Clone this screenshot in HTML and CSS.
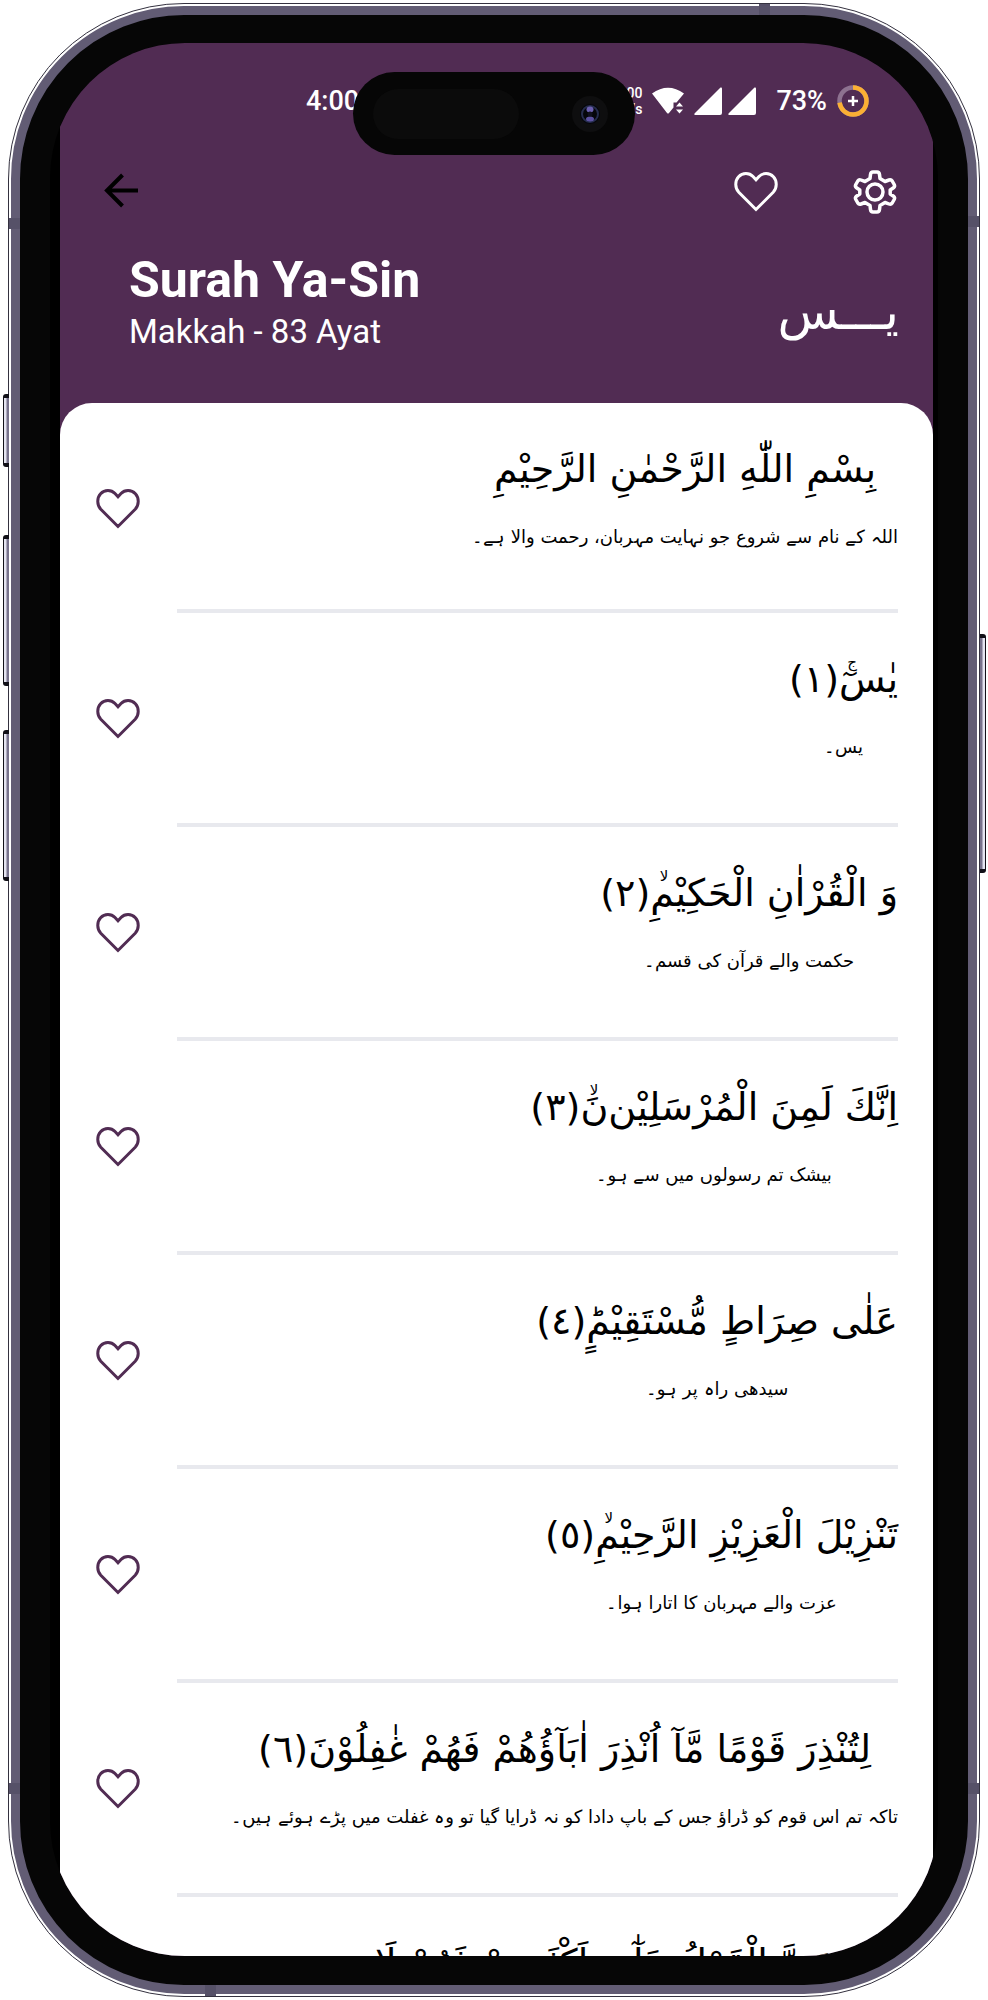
FILE: index.html
```html
<!DOCTYPE html>
<html lang="en">
<head>
<meta charset="utf-8">
<meta name="viewport" content="width=device-width, initial-scale=1">
<title>Surah Ya-Sin</title>
<link rel="stylesheet" href="styles.css">
</head>
<body>
<svg class="defs" aria-hidden="true">
  <symbol id="heart" viewBox="0 0 48 48"><path d="M24 42.500 6.800 25.300C2.800 21 2.800 13.800 6.600 9.700c4-4.300 10.600-4.200 14.400-.2l3 3.200 3-3.200c3.800-4 10.400-4.100 14.400.2 3.800 4.100 3.800 11.300-.2 15.600z" fill="none" stroke="currentColor" stroke-width="3"/></symbol>
</svg>
<div class="phone">
  <span class="key key-action"></span>
  <span class="key key-up"></span>
  <span class="key key-down"></span>
  <span class="key key-power"></span>
  <span class="band band-tl"></span>
  <span class="band band-tr"></span>
  <span class="band band-bl"></span>
  <span class="band band-br"></span>
  <span class="band band-top"></span>
  <span class="band band-bottom"></span>
  <div class="bezel">
    <div class="glass">
      <div class="island"><span class="sensor"></span>
        <svg class="camera" viewBox="0 0 36 36" aria-hidden="true"><circle cx="18" cy="18" r="18" fill="#0e0e0f"/><circle cx="18" cy="18" r="10" fill="#05060a"/><circle cx="18" cy="18" r="8" fill="none" stroke="#252c4c" stroke-width="2"/><ellipse cx="18" cy="13.500" rx="3.500" ry="3" fill="#6a5fb0"/><ellipse cx="18" cy="23" rx="4" ry="2.500" fill="#5a50a0"/><circle cx="18" cy="18" r="2.500" fill="#10101c"/></svg>
      </div>
      <div class="screen">
        <header class="header">
          <div class="status">
            <span class="time">4:00</span>
            <div class="indicators">
              <span class="speed"><span>00</span><span>/s</span></span>
              <svg class="wifi" viewBox="0 0 32 28" aria-hidden="true"><path d="M0 6.500Q16-5 32 6.500L24.500 15.500h-3v5L17 26Q16 27 15 26z" fill="currentColor"/><path d="m24 19.500 3.500-4 3.500 4zM24 22.500l3.500 4 3.500-4z" fill="currentColor"/></svg>
              <span class="signals">
                <svg class="signal" viewBox="0 0 28 28" aria-hidden="true"><path d="M26.500.5Q28 0 28 1.500V26q0 2-2 2H1Q0 28 .5 26.500z" fill="currentColor"/></svg>
                <svg class="signal" viewBox="0 0 28 28" aria-hidden="true"><path d="M26.500.5Q28 0 28 1.500V26q0 2-2 2H1Q0 28 .5 26.500z" fill="currentColor"/></svg>
              </span>
              <span class="percent">73%</span>
              <svg class="battery" viewBox="0 0 32 32" aria-hidden="true"><circle cx="16" cy="16" r="13.500" fill="none" stroke="#8d7290" stroke-width="4.500"/><circle cx="16" cy="16" r="13.500" fill="none" stroke="#fbb034" stroke-width="4.500" pathLength="100" stroke-dasharray="73 27" transform="rotate(-90 16 16)"/><path d="M16 11v10M11 16h10" stroke="#fff" stroke-width="2.500"/></svg>
            </div>
          </div>
          <nav class="toolbar">
            <button class="icon-button back" type="button" aria-label="Back"><svg viewBox="0 0 48 48" aria-hidden="true"><path d="M42 23.500H11M26.500 8 11 23.500 26.500 39" fill="none" stroke="currentColor" stroke-width="4"/></svg></button>
            <button class="icon-button" type="button" aria-label="Favourite surah"><svg aria-hidden="true"><use href="#heart"/></svg></button>
            <button class="icon-button" type="button" aria-label="Settings"><svg viewBox="0 0 48 48" aria-hidden="true"><g fill="none" stroke="currentColor" stroke-width="3.500" stroke-linejoin="round"><circle cx="24" cy="25" r="8"/><path d="M19.500 7.500Q19.800 5 22 5h4q2.200 0 2.500 2.500l.5 4 5 3 4-1.500q2-.8 3.200 1l2 3.500q1 2-.7 3.300L39.200 23v4l3.300 2.200q1.700 1.300.7 3.300l-2 3.500q-1.200 1.800-3.200 1l-4-1.500-5 3-.5 4q-.3 2.500-2.500 2.500h-4q-2.200 0-2.500-2.500l-.5-4-5-3-4 1.500q-2 .8-3.200-1l-2-3.500q-1-2 .7-3.300L8.800 27v-4l-3.300-2.200Q3.800 19.500 4.800 17.500l2-3.500q1.200-1.800 3.200-1l4 1.500 5-3z"/></g></svg></button>
          </nav>
          <div class="heading">
            <div>
              <h1 class="title">Surah Ya-Sin</h1>
              <p class="subtitle">Makkah - 83 Ayat</p>
            </div>
            <span class="name" lang="ar" dir="rtl">يـــس</span>
          </div>
        </header>
        <main class="sheet">
          <ul class="ayat">
            <li class="ayah"><button class="like" type="button" aria-label="Like"><svg aria-hidden="true"><use href="#heart"/></svg></button><div class="body"><div class="text" dir="rtl"><p class="verse" lang="ar">بِسْمِ اللّٰهِ الرَّحْمٰنِ الرَّحِيْمِ</p><p class="translation" lang="ur">اللہ کے نام سے شروع جو نہایت مہربان، رحمت والا ہے۔</p></div></div></li>
            <li class="ayah"><button class="like" type="button" aria-label="Like"><svg aria-hidden="true"><use href="#heart"/></svg></button><div class="body"><div class="text" dir="rtl"><p class="verse" lang="ar">یٰسٓ<span class="pause"><small>ج</small></span>(۱)</p><p class="translation" lang="ur">یس۔</p></div></div></li>
            <li class="ayah"><button class="like" type="button" aria-label="Like"><svg aria-hidden="true"><use href="#heart"/></svg></button><div class="body"><div class="text" dir="rtl"><p class="verse" lang="ar">وَ الْقُرْاٰنِ الْحَكِیْمِ<span class="pause"><small>لا</small></span>(٢)</p><p class="translation" lang="ur">حکمت والے قرآن کی قسم۔</p></div></div></li>
            <li class="ayah"><button class="like" type="button" aria-label="Like"><svg aria-hidden="true"><use href="#heart"/></svg></button><div class="body"><div class="text" dir="rtl"><p class="verse" lang="ar">اِنَّكَ لَمِنَ الْمُرْسَلِیْن‌نَ<span class="pause"><small>لا</small></span>(٣)</p><p class="translation" lang="ur">بیشک تم رسولوں میں سے ہو۔</p></div></div></li>
            <li class="ayah"><button class="like" type="button" aria-label="Like"><svg aria-hidden="true"><use href="#heart"/></svg></button><div class="body"><div class="text" dir="rtl"><p class="verse" lang="ar">عَلٰى صِرَاطٍ مُّسْتَقِیْمٍؕ(٤)</p><p class="translation" lang="ur">سیدھی راہ پر ہو۔</p></div></div></li>
            <li class="ayah"><button class="like" type="button" aria-label="Like"><svg aria-hidden="true"><use href="#heart"/></svg></button><div class="body"><div class="text" dir="rtl"><p class="verse" lang="ar">تَنْزِیْلَ الْعَزِیْزِ الرَّحِیْمِ<span class="pause"><small>لا</small></span>(٥)</p><p class="translation" lang="ur">عزت والے مہربان کا اتارا ہوا۔</p></div></div></li>
            <li class="ayah"><button class="like" type="button" aria-label="Like"><svg aria-hidden="true"><use href="#heart"/></svg></button><div class="body"><div class="text" dir="rtl"><p class="verse" lang="ar">لِتُنْذِرَ قَوْمًا مَّآ اُنْذِرَ اٰبَآؤُهُمْ فَهُمْ غٰفِلُوْنَ(٦)</p><p class="translation" lang="ur">تاکہ تم اس قوم کو ڈراؤ جس کے باپ دادا کو نہ ڈرایا گیا تو وہ غفلت میں پڑے ہوئے ہیں۔</p></div></div></li>
            <li class="ayah"><div class="body"><div class="text" dir="rtl"><p class="verse" lang="ar">لَقَدْ حَقَّ الْقَوْلُ عَلٰٓى اَكْثَرِهِمْ فَهُمْ لَا</p></div></div></li>
          </ul>
        </main>
      </div>
    </div>
  </div>
</div>
</body>
</html>
```
FILE: styles.css
```css
* {
  box-sizing: border-box;
}

body {
  margin: 0;
  padding: 3px 8px;
  background: #fff;
  font-family: Roboto, "Liberation Sans", sans-serif;
}

h1, p, ul {
  margin: 0;
  padding: 0;
}

button {
  padding: 0;
  border: 0;
  background: none;
  color: inherit;
}

svg {
  display: block;
}

.defs {
  display: block;
  width: 0;
  height: 0;
  position: absolute;
}

/* Device frame */

.phone {
  position: relative;
  height: calc(100vh - 6px);
  padding: 2px;
  border: 1px solid #34313f;
  border-radius: 176px;
  background: #fff;
}

.bezel {
  height: 100%;
  padding: 28px 30px 29px;
  border: 9px solid #625c74;
  border-radius: 173px;
  background: #060606;
}

.glass {
  position: relative;
  height: 100%;
  padding: 0 5px 0 10px;
  border-radius: 135px;
  overflow: hidden;
  background: #000;
}

.key {
  position: absolute;
  left: -6px;
  width: 6px;
  border: 1px solid #111018;
  border-width: 4px 0 4px 1px;
  border-radius: 3px 0 0 3px;
  background: linear-gradient(90deg, #e4e4f0 40%, #77728c 60%);
}

.key-action { top: 390px; height: 73px; }
.key-up { top: 531px; height: 151px; }
.key-down { top: 726px; height: 151px; }

.key-power {
  left: auto;
  right: -7px;
  top: 630px;
  height: 239px;
  border-width: 4px 1px 4px 0;
  border-radius: 0 3px 3px 0;
  background: linear-gradient(270deg, #e4e4f0 40%, #77728c 60%);
}

.band {
  position: absolute;
  width: 11px;
  height: 11px;
  background: #565168;
}

.band-tl { left: 0; top: 214px; }
.band-tr { right: 0; top: 212px; }
.band-bl { left: 0; bottom: 202px; }
.band-br { right: 0; bottom: 202px; }
.band-top { right: 209px; top: 0; }
.band-bottom { left: 196px; bottom: 0; }

.island {
  position: absolute;
  z-index: 2;
  top: 29px;
  left: 50%;
  width: 282px;
  height: 83px;
  margin-left: -141px;
  display: flex;
  align-items: center;
  justify-content: space-between;
  padding: 0 27px 0 20px;
  border-radius: 42px;
  background: #060606;
}

.sensor {
  width: 146px;
  height: 50px;
  border-radius: 25px;
  background: #0b0b0b;
}

.camera {
  width: 36px;
  height: 36px;
}

/* App */

.screen {
  display: flex;
  flex-direction: column;
  height: 100%;
  overflow: hidden;
  background: #512c53;
}

.header {
  flex: none;
  padding: 42px 34px 49px 36px;
  color: #fff;
}

.status {
  display: flex;
  align-items: center;
  justify-content: space-between;
  height: 32px;
  padding: 0 30px 0 210px;
  font-size: 27px;
  font-weight: 500;
}

.indicators {
  display: flex;
  align-items: center;
  gap: 10px;
}

.speed {
  display: flex;
  flex-direction: column;
  align-items: flex-end;
  font-size: 14px;
  line-height: 16px;
}

.wifi {
  width: 32px;
  height: 28px;
}

.signals {
  display: flex;
  gap: 6px;
  margin-right: 10px;
}

.signal {
  width: 28px;
  height: 28px;
}

.battery {
  width: 32px;
  height: 32px;
}

.toolbar {
  display: flex;
  gap: 71px;
  margin-top: 50px;
}

.icon-button,
.like {
  width: 48px;
  height: 48px;
}

.icon-button svg,
.like svg {
  width: 48px;
  height: 48px;
}

.back {
  margin-right: auto;
  color: #000;
}

.heading {
  display: flex;
  align-items: flex-end;
  justify-content: space-between;
  margin-top: 35px;
  padding-left: 33px;
}

.title {
  font-size: 50px;
  line-height: 60px;
  font-weight: 700;
}

.subtitle {
  font-size: 33px;
  line-height: 44px;
}

.name {
  font-family: "DejaVu Sans", sans-serif;
  font-size: 50px;
  line-height: 84px;
}

.sheet {
  flex: 1;
  min-height: 0;
  overflow: hidden;
  border-radius: 32px 32px 0 0;
  background: #fff;
}

.ayat {
  list-style: none;
}

.ayah {
  display: flex;
  gap: 35px;
  padding: 0 35px 0 34px;
  color: #512c53;
}

.like {
  flex: none;
  margin-top: 81px;
}

.body {
  flex: 1;
  display: flex;
  justify-content: flex-end;
  min-height: 214px;
  border-bottom: 4px solid #e8e9ee;
}

.ayah:first-child .body {
  min-height: 210px;
}

.text {
  display: flex;
  flex-direction: column;
  align-items: center;
  padding-top: 30px;
  color: #000;
  font-family: "DejaVu Sans", sans-serif;
  white-space: nowrap;
}

.verse {
  font-size: 38px;
  line-height: 72px;
}

/* Waqf sign drawn above the last letter of the verse */
.pause {
  position: relative;
}

.pause small {
  position: absolute;
  right: -18px;
  bottom: 31px;
  font-size: 15px;
  line-height: 16px;
}

.translation {
  font-size: 18px;
  line-height: 64px;
}
```
